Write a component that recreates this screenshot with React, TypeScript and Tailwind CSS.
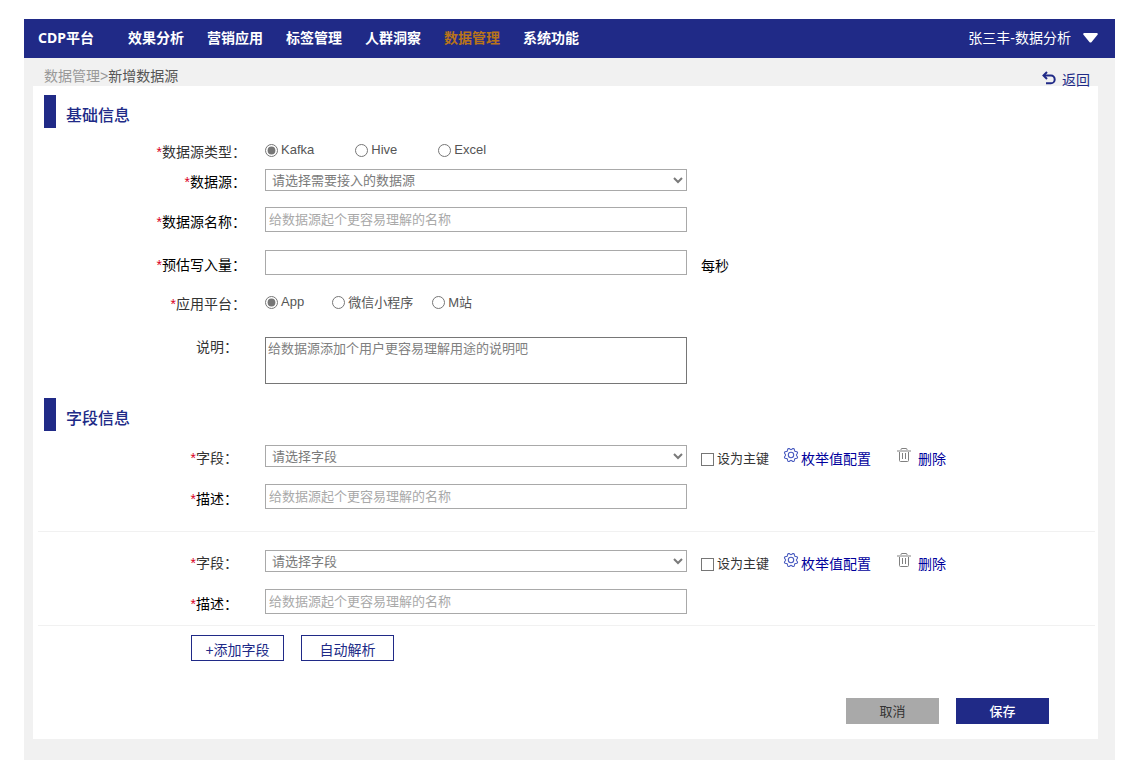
import React from "react";

type Option = { label: string; latin?: boolean; spacing: string };

const sourceTypes: Option[] = [
  { label: "Kafka", latin: true, spacing: "mr-[41px]" },
  { label: "Hive", latin: true, spacing: "mr-[41px]" },
  { label: "Excel", latin: true, spacing: "" },
];

const platforms: Option[] = [
  { label: "App", latin: true, spacing: "mr-7" },
  { label: "微信小程序", spacing: "mr-[19px]" },
  { label: "M站", spacing: "" },
];

const menu = ["效果分析", "营销应用", "标签管理", "人群洞察", "数据管理", "系统功能"];

// Outline of a gear with eight rounded teeth, centred on (8, 8).
const gearPath =
  Array.from({ length: 96 }, (_, i) => {
    const a = (i / 96) * Math.PI * 2;
    const r = 6.2 + 0.8 * Math.cos(8 * a + Math.PI);
    return `${i ? "L" : "M"}${(8 + r * Math.cos(a)).toFixed(2)} ${(8 + r * Math.sin(a)).toFixed(2)}`;
  }).join("") + "Z";

function GearIcon() {
  return (
    <svg viewBox="0 0 16 16" className="size-4 shrink-0" fill="none" stroke="#4a5cc0" strokeWidth="1.1" aria-hidden="true">
      <path d={gearPath} />
      <circle cx="8" cy="8" r="2.7" />
    </svg>
  );
}

function TrashIcon() {
  return (
    <svg viewBox="0 0 14 16" className="h-4 w-[14px] shrink-0" fill="none" stroke="#808080" strokeWidth="1" aria-hidden="true">
      <path d="M0 4H14" stroke="#c0c0c0" strokeWidth="2" />
      <path d="M4 3V2.5Q4 1.5 5 1.5H9Q10 1.5 10 2.5V3" />
      <path d="M2.5 5V13.5Q2.5 14.5 3.5 14.5H10.5Q11.5 14.5 11.5 13.5V5" />
      <path d="M5.5 6V12M8.5 6V12" />
    </svg>
  );
}

function BackIcon() {
  return (
    <svg viewBox="0 0 14 15" className="h-[15px] w-[14px] shrink-0" fill="none" stroke="#202a87" strokeWidth="2" aria-hidden="true">
      <path d="M2 5.5H9A3.7 3.9 0 0 1 9 13.3H4" />
      <path d="M5 2L1.5 5.5L5 9" />
    </svg>
  );
}

function Label({ text, htmlFor, required = true, narrow = false, dark = false }: {
  text: string; htmlFor?: string; required?: boolean; narrow?: boolean; dark?: boolean;
}) {
  return (
    <div className={`shrink-0 text-right text-sm leading-[18px] ${required ? "pt-1" : "pt-px"} ${narrow ? "mr-[27px] w-[205px]" : "mr-[19px] w-[213px]"} ${dark ? "text-black" : "text-[#333]"}`}>
      <label htmlFor={htmlFor}>
        {required && <span className="text-[#d9001b]">*</span>}
        {text}：
      </label>
    </div>
  );
}

function RadioGroup({ name, options }: { name: string; options: Option[] }) {
  return (
    <div role="radiogroup" aria-label={name} className="flex items-center text-[13px] leading-5 text-[#555]">
      {options.map((o, i) => (
        <label key={o.label} className={`flex items-center gap-[3px] ${o.spacing}`}>
          <input type="radio" name={name} defaultChecked={i === 0} className="size-[13px] accent-[#767676]" />
          <span className={o.latin ? "" : "pt-[2px]"}>{o.label}</span>
        </label>
      ))}
    </div>
  );
}

function Select({ id, text }: { id: string; text: string }) {
  return (
    <select id={id} className="h-[22px] max-w-[422px] min-w-0 flex-1 border border-[#a9a9a9] bg-white px-[2px] text-[13px] leading-5 text-[#7a7a7a]">
      <option>{text}</option>
    </select>
  );
}

function TextInput({ id, placeholder }: { id: string; placeholder?: string }) {
  return (
    <input
      id={id}
      type="text"
      placeholder={placeholder}
      className="h-[25px] max-w-[422px] min-w-0 flex-1 border border-[#a9a9a9] bg-white px-[3px] text-[13px] leading-5 placeholder:text-[#a9a9a9]"
    />
  );
}

function SectionTitle({ children }: { children: React.ReactNode }) {
  return (
    <div className="ml-[11px] flex items-center gap-[10px]">
      <span className="h-[33px] w-3 bg-[#202a87]" />
      <h2 className="pt-2 text-base leading-6 font-medium text-[#202a87]">{children}</h2>
    </div>
  );
}

function FieldBlock({ id }: { id: string }) {
  return (
    <>
      <div className="flex items-center">
        <Label text="字段" htmlFor={`${id}-field`} narrow />
        <Select id={`${id}-field`} text="请选择字段" />
        <div className="flex h-[22px] items-center pt-[6px]">
          <label className="ml-[14px] flex items-center gap-[3px] text-[13px] leading-5 text-[#333]">
            <input type="checkbox" className="size-[13px] appearance-none border border-[#767676] bg-white checked:bg-[#767676]" />
            设为主键
          </label>
          <button type="button" className="ml-[14px] flex items-start gap-[2px] text-sm leading-6 text-[#00009c]">
            <GearIcon />
            枚举值配置
          </button>
          <button type="button" className="ml-[26px] flex items-start gap-[7px] text-sm leading-6 text-[#00009c]">
            <TrashIcon />
            删除
          </button>
        </div>
      </div>
      <div className="mt-[17px] flex items-center">
        <Label text="描述" htmlFor={`${id}-desc`} narrow dark />
        <TextInput id={`${id}-desc`} placeholder="给数据源起个更容易理解的名称" />
      </div>
    </>
  );
}

export default function App() {
  return (
    <div className="min-h-screen bg-white pt-[19px] pr-[22px] pb-2 pl-6 font-['Liberation_Sans','Noto_Sans_CJK_SC',sans-serif]">
      <header className="flex h-[39px] items-center bg-[#202a87] pr-[17px] pb-[2px] pl-[14px] text-sm leading-5 text-white">
        <span className="font-['Noto_Sans','Noto_Sans_CJK_SC',sans-serif] font-bold">CDP平台</span>
        <nav className="ml-[34px] flex gap-[23px] font-bold">
          {menu.map((m) => (
            <a key={m} href="#" className={m === "数据管理" ? "text-[#b8741a]" : ""}>{m}</a>
          ))}
        </nav>
        <button type="button" className="ml-auto flex items-center gap-3">
          张三丰-数据分析
          <svg viewBox="0 0 15 10" className="h-[10px] w-[15px]" fill="#fff" aria-hidden="true">
            <path d="M1 0H14Q15.4 0.6 14.5 1.8L8.6 9Q7.5 10.2 6.4 9L0.5 1.8Q-0.4 0.6 1 0Z" />
          </svg>
        </button>
      </header>

      <main className="bg-[#f1f1f1] pr-[17px] pb-[21px] pl-[9px]">
        <div className="flex h-7 items-start justify-between pr-2 pl-[11px] text-sm leading-5">
          <p className="pt-2 text-[#555]">
            <a href="#" className="text-[#999]">数据管理&gt;</a>新增数据源
          </p>
          <a href="#" className="flex items-start gap-[6px] pt-3 text-[#202a87]">
            <BackIcon />
            返回
          </a>
        </div>

        <form className="bg-white pt-[9px] pb-[15px]" onSubmit={(e) => e.preventDefault()}>
          <SectionTitle>基础信息</SectionTitle>
          <div className="mt-[11px] flex items-center">
            <Label text="数据源类型" />
            <RadioGroup name="数据源类型" options={sourceTypes} />
          </div>
          <div className="mt-2 flex items-center">
            <Label text="数据源" htmlFor="source" dark />
            <Select id="source" text="请选择需要接入的数据源" />
          </div>
          <div className="mt-4 flex items-center">
            <Label text="数据源名称" htmlFor="source-name" dark />
            <TextInput id="source-name" placeholder="给数据源起个更容易理解的名称" />
          </div>
          <div className="mt-[18px] flex items-center">
            <Label text="预估写入量" htmlFor="volume" dark />
            <TextInput id="volume" />
            <span className="ml-[14px] pt-[7px] text-sm leading-[18px] text-black">每秒</span>
          </div>
          <div className="mt-4 flex items-center">
            <Label text="应用平台" />
            <RadioGroup name="应用平台" options={platforms} />
          </div>
          <div className="mt-6 flex items-start">
            <Label text="说明" htmlFor="note" required={false} narrow />
            <textarea
              id="note"
              placeholder="给数据源添加个用户更容易理解用途的说明吧"
              className="h-[47px] max-w-[422px] min-w-0 flex-1 resize-none border border-[#767676] bg-white px-[2px] py-[2px] text-[13px] leading-[18px] placeholder:text-[#808080]"
            />
          </div>

          <div className="mt-[14px]">
            <SectionTitle>字段信息</SectionTitle>
          </div>
          <div className="mt-[14px]">
            <FieldBlock id="first" />
          </div>
          <hr className="mt-[22px] mr-[3px] ml-[5px] border-[#f1f1f1]" />
          <div className="mt-[18px]">
            <FieldBlock id="second" />
          </div>
          <hr className="mt-[11px] mr-[3px] ml-[5px] border-[#f1f1f1]" />

          <div className="mt-[9px] ml-[158px] flex gap-[17px] text-sm leading-5 text-[#202a87]">
            <button type="button" className="h-[26px] w-[93px] border border-[#202a87] pt-1">+添加字段</button>
            <button type="button" className="h-[26px] w-[93px] border border-[#202a87] pt-1">自动解析</button>
          </div>
          <div className="mt-[37px] mr-[49px] flex justify-end gap-[17px] text-[13px] leading-5">
            <button type="button" className="h-[26px] w-[93px] bg-[#a9a9a9] pt-[2px] text-[#333]">取消</button>
            <button type="submit" className="h-[26px] w-[93px] bg-[#202a87] pt-[2px] font-medium text-white">保存</button>
          </div>
        </form>
      </main>
    </div>
  );
}
